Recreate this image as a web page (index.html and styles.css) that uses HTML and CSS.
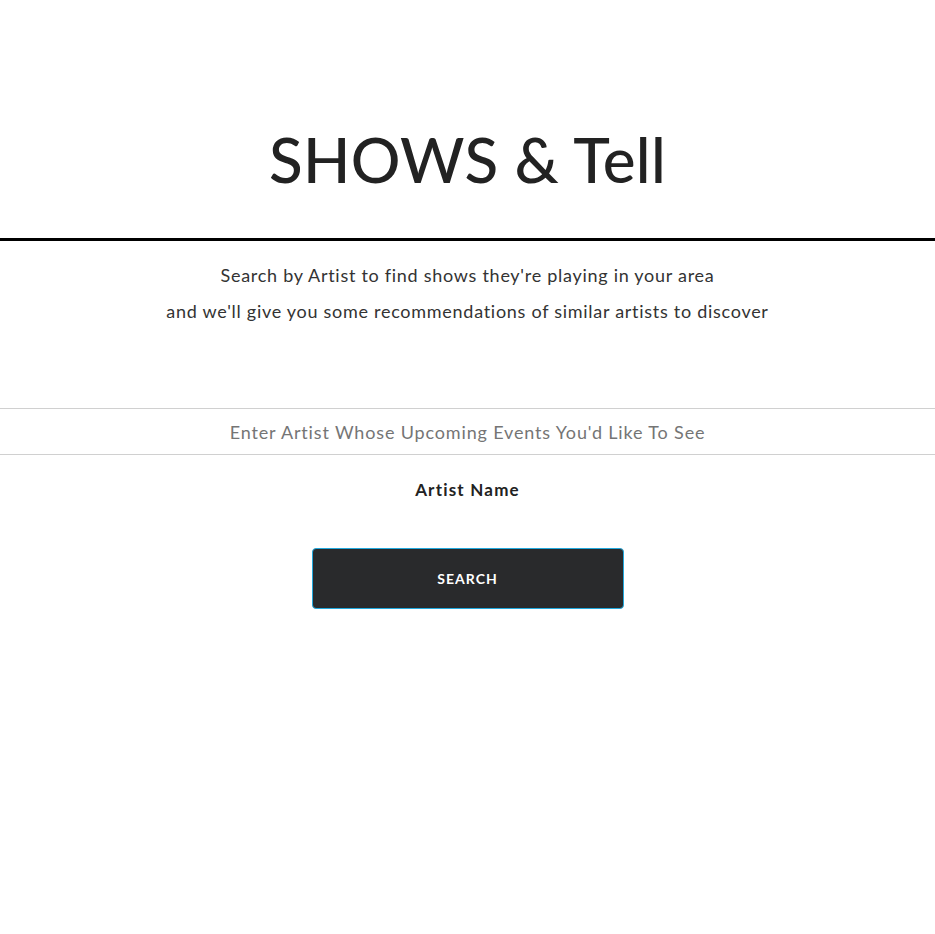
FILE: index.html
```html
<!DOCTYPE html>
<html lang="en">
<head>
<meta charset="utf-8">
<title>SHOWS &amp; Tell</title>
<link rel="stylesheet" href="styles.css">
</head>
<body>
<header class="hero">
  <h1 class="title">SHOWS &amp; Tell</h1>
</header>
<section class="intro">
  <p>Search by Artist to find shows they're playing in your area</p>
  <p>and we'll give you some recommendations of similar artists to discover</p>
</section>
<form class="search">
  <input class="artist-input" type="text" placeholder="Enter Artist Whose Upcoming Events You'd Like To See">
  <label class="artist-label">Artist Name</label>
  <button class="search-btn" type="button">SEARCH</button>
</form>
</body>
</html>
```
FILE: styles.css
```css
* { box-sizing: border-box; }
body {
  margin: 0;
  font-family: "Lato", "Open Sans", sans-serif;
  color: #222;
  background: #fff;
}
.hero {
  height: 241px;
  border-bottom: 3px solid #000;
  display: flex;
  align-items: flex-start;
  justify-content: center;
  padding-top: 119px;
}
.title {
  margin: 0;
  font-size: 62px;
  font-weight: 500;
  line-height: 80px;
  color: #222;
  letter-spacing: 0.3px;
}
.intro {
  text-align: center;
  padding-top: 16px;
}
.intro p {
  margin: 0;
  font-size: 18px;
  line-height: 36px;
  color: #333;
  font-weight: 400;
  letter-spacing: 0.72px;
}
.search {
  margin-top: 79px;
  display: flex;
  flex-direction: column;
  align-items: center;
}
.artist-input {
  width: 100%;
  height: 47px;
  border: none;
  border-top: 1px solid #d0d0d0;
  border-bottom: 1px solid #d0d0d0;
  text-align: center;
  font-family: inherit;
  font-size: 18px;
  letter-spacing: 0.85px;
  color: #222;
  outline: none;
}
.artist-input::placeholder { color: #757575; }
.artist-label {
  margin-top: 24px;
  font-size: 17px;
  font-weight: 700;
  letter-spacing: 1.2px;
  color: #222;
}
.search-btn {
  margin-top: 48px;
  width: 312px;
  height: 61px;
  background: #292a2c;
  color: #fff;
  border: 1px solid #22a8dc;
  border-radius: 4px;
  font-family: inherit;
  font-size: 14px;
  font-weight: 700;
  letter-spacing: 1px;
}
```
